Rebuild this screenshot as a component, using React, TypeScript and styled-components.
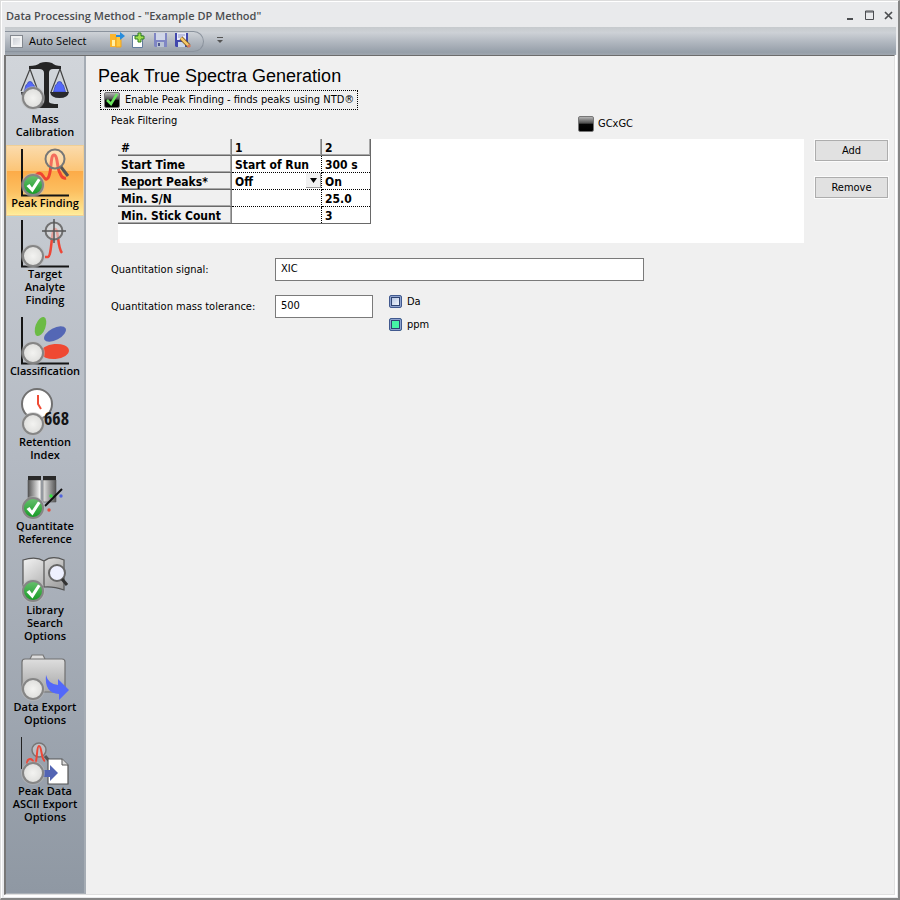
import React from "react";
import styled, { createGlobalStyle } from "styled-components";

const tahoma = `"DejaVu Sans Condensed", "DejaVu Sans", sans-serif`;
const segoe = `"Open Sans", "Noto Sans", sans-serif`;

const GlobalStyle = createGlobalStyle`
  *, *::before, *::after { box-sizing: border-box; }
  body { margin: 0; background: #e9eaec; }
  button, input, select { font: inherit; color: inherit; margin: 0; }
`;

const Window = styled.div`
  display: flex;
  flex-direction: column;
  min-height: 100vh;
  padding: 0 2px 3px 3px;
  background: #e9eaec;
  border: solid;
  border-width: 1px 2px 2px 1px;
  border-color: #dcdcdc #868686 #868686 #dcdcdc;
  box-shadow: inset 1px 1px 0 #ffffff;
  color: #000;
`;

const TitleBar = styled.header`
  display: flex;
  align-items: center;
  justify-content: space-between;
  height: 26px;
  padding: 4px 2px 0 2px;
`;

const WindowTitle = styled.h1`
  margin: 0;
  font: 600 11px/16px ${segoe};
  color: #4b4d50;
`;

const WindowButtons = styled.div`
  display: flex;
  gap: 7px;
`;

const WindowButton = styled.button`
  width: 12px;
  height: 16px;
  padding: 0;
  border: 0;
  background: none;
  svg { display: block; }
`;

const Toolbar = styled.div`
  display: flex;
  align-items: center;
  height: 28px;
  margin-left: 1px;
  background: linear-gradient(#c6cacd, #cdd1d6 20%, #b4bac2 50%, #969fa9 90%, #a0a7af);
`;

const ToolGroup = styled.div`
  display: flex;
  align-items: center;
  width: 199px;
  height: 21px;
  padding-left: 5px;
  border: 1px solid #8b939d;
  border-left: 0;
  border-radius: 0 11px 11px 0;
`;

const AutoSelect = styled.label`
  display: flex;
  align-items: center;
  gap: 6px;
  width: 96px;
  font: 500 11px/16px ${segoe};
`;

const SmallCheck = styled.input`
  appearance: none;
  width: 13px;
  height: 13px;
  border: 1px solid #83888f;
  background: linear-gradient(135deg, #c5c9d0, #f7f8f9);
  box-shadow: inset 0 0 0 2px #f1f2f3;
`;

const ToolButton = styled.button`
  width: 22px;
  height: 18px;
  padding: 0 2px;
  border: 0;
  background: none;
  svg { display: block; }
`;

const OverflowButton = styled(ToolButton)`
  width: 16px;
  margin-left: 8px;
`;

const Body = styled.div`
  display: flex;
  flex: 1;
  margin-right: 1px;
  border: solid;
  border-width: 1px 1px 1px 2px;
  border-color: #6c6c6c #e0e0e0 #e0e0e0 #777777;
  box-shadow: 1px 1px 0 1px #fff;
  background: #f0f0f0;
`;

const Sidebar = styled.nav`
  width: 80px;
  flex: none;
  padding-top: 5px;
  border-right: 2px solid #a5acb4;
  border-bottom: 1px solid #aab0b7;
  background: linear-gradient(#d1d5da, #b4bac3 48%, #8f98a3);
`;

const NavItem = styled.button<{ $active?: boolean }>`
  display: block;
  width: 100%;
  padding: 0 0 7px;
  border: 0;
  background: ${(p) =>
    p.$active
      ? "linear-gradient(#fbdcae 0, #fcc577 36%, #fcab48 37%, #fcbf60 65%, #feea96 97%, #fff3b4)"
      : "none"};
  box-shadow: ${(p) => (p.$active ? "inset 0 0 0 1px #f0cf96, 0 1px 0 #b9d3d8" : "none")};
  font: 600 11px/13px ${segoe};
  text-align: center;
  white-space: pre-line;
  svg { display: block; margin: 0 auto; overflow: visible; }
`;

const Content = styled.main`
  flex: 1;
  min-width: 0;
  padding: 10px 6px 20px 11px;
  font: 11px/14px ${tahoma};
`;

const Heading = styled.h2`
  margin: 0;
  padding-left: 1px;
  font: 18px/20px "Liberation Sans", Arial, sans-serif;
`;

const EnableLabel = styled.label`
  display: inline-flex;
  align-items: center;
  gap: 5px;
  height: 20px;
  margin: 4px 0 0 3px;
  padding: 0 3px;
  border: 1px dotted #000;
  vertical-align: top;
`;

const GlossCheck = styled.input`
  appearance: none;
  flex: none;
  display: grid;
  width: 16px;
  height: 16px;
  border: 1px solid #777;
  border-radius: 2px;
  background: linear-gradient(#b5b5b5, #4c4c4c 45%, #060606 50%, #000);
`;

const CheckSlot = styled.span`
  display: grid;
  width: 16px;
  height: 16px;
  & > * { grid-area: 1 / 1; }
  svg { pointer-events: none; z-index: 1; }
`;

const FilterHeader = styled.div`
  display: flex;
  align-items: flex-start;
  height: 29px;
  padding: 4px 0 0 14px;
`;

const FilterTitle = styled.h3`
  flex: 0 0 467px;
  margin: 0;
  font: inherit;
`;

const GcLabel = styled.label`
  display: flex;
  align-items: center;
  gap: 4px;
  margin-top: 2px;
`;

const FilterArea = styled.section`
  display: flex;
  gap: 11px;
  padding-left: 21px;
`;

const GridPanel = styled.div`
  flex: 1;
  min-width: 0;
  min-height: 104px;
  background: #fff;
`;

const Grid = styled.table`
  width: 252px;
  table-layout: fixed;
  border-collapse: separate;
  border-spacing: 0;
  font: bold 12px/14px ${tahoma};
  text-align: left;
  border-right: 1px solid #696969;
  border-bottom: 1px solid #696969;
`;

const HeadCell = styled.th`
  height: 17px;
  padding: 2px 3px 0;
  background: #f0f0f0;
  border-right: 1px solid #808080;
  border-bottom: 1px solid #696969;
  box-shadow: inset -1px -1px 0 #a8a8a8;
  white-space: nowrap;
  tr:last-child > & { border-bottom: 0; height: 16px; }
  &:last-child { border-right: 0; }
`;

const Cell = styled.td`
  position: relative;
  height: 17px;
  padding: 2px 3px 0;
  border-right: 1px dotted #000;
  border-bottom: 1px dotted #000;
  white-space: nowrap;
  tr:last-child > & { border-bottom: 0; height: 16px; }
  &:last-child { border-right: 0; }
`;

const ReportSelect = styled.select`
  appearance: none;
  display: block;
  width: 100%;
  height: 14px;
  padding: 0;
  border: 0;
  background: none;
`;

const DropArrow = styled.span`
  position: absolute;
  top: 0;
  right: 0;
  width: 15px;
  height: 15px;
  background: #f0f0f0;
  border: solid;
  border-width: 0 1px 1px 0;
  border-color: #a0a0a0;
  pointer-events: none;
  svg { display: block; }
`;

const ButtonStack = styled.div`
  display: flex;
  flex-direction: column;
  gap: 16px;
  width: 73px;
  padding-top: 1px;
`;

const PushButton = styled.button`
  height: 21px;
  padding: 1px 0 0;
  border: 1px solid #adadad;
  background: #e1e1e1;
  box-shadow: 0 0 0 1px #fbfbfb;
`;

const Form = styled.form`
  display: grid;
  grid-template-columns: 164px 1fr;
  row-gap: 14px;
  padding: 15px 0 0 14px;
`;

const FieldLabel = styled.label`
  padding-top: 5px;
`;

const TextField = styled.input<{ $width: number }>`
  width: ${(p) => p.$width}px;
  max-width: 100%;
  height: 23px;
  padding: 0 5px 2px;
  border: 1px solid #7a7a7a;
  border-radius: 0;
  background: #fff;
`;

const ToleranceRow = styled.div`
  display: flex;
  gap: 16px;
`;

const Units = styled.fieldset`
  display: flex;
  flex-direction: column;
  gap: 10px;
  margin: 0;
  padding: 0;
  border: 0;
  min-width: 0;
`;

const UnitLabel = styled.label`
  display: flex;
  align-items: center;
  gap: 5px;
  line-height: 12px;
`;

const UnitRadio = styled.input`
  appearance: none;
  width: 13px;
  height: 13px;
  border: 1px solid #41598f;
  border-radius: 2px;
  background: linear-gradient(135deg, #a9bde0, #fff);
  box-shadow: inset 0 0 0 1px #8ea3cf, inset 0 0 0 2px #2e4271;
  &:checked { background: #45f5a5; }
`;

/* Shared badge drawn at the lower left of every step icon. */
const Badge = ({ done, y = 40 }: { done?: boolean; y?: number }) => (
  <g>
    <circle cx="16" cy={y} r="12" fill="#bbb" opacity=".5" />
    <circle cx="16" cy={y} r="10" fill={done ? "url(#badgeGreen)" : "url(#badgeGray)"} stroke="#858585" strokeWidth="2" />
    {done && (
      <path d={`M9.500 ${y + 1} l3 -2 l2.500 3.500 l6 -9 l2.500 1.500 l-8 12.500 z`} fill="#fff" />
    )}
  </g>
);

const Axes = () => (
  <path d="M5 4V51.500M4 50.500H52" fill="none" stroke="#151515" strokeWidth="2" />
);

const Weight = ({ x }: { x: number }) => (
  <path d={`M${x - 2.5} 23a2.500 2.500 0 1 1 5 0l1.500 1l2 7h-12l2-7z`} fill="#5468fa" stroke="#3343ad" strokeWidth=".7" />
);

const BalanceArt = () => (
  <>
    <path d="M12 5Q20 5 23 2Q29 0 35 2Q38 5 44 5V8H36Q32 8 32 12V41Q33 43 41 43V47H17V43Q26 43 27 41V12Q27 8 22 8H12Z" fill="#252525" />
    <path d="M13 8L4 30M13 8l8 22M43 8l-9 23M43 8l8 23" stroke="#444" strokeWidth="1.200" fill="none" />
    <Weight x={13} />
    <Weight x={42.5} />
    <path d="M33 31h19q-1 6-9.500 6t-9.500-6zM4 31h17q-1 6-9 6t-8-6z" fill="#29292d" />
    <Badge y={37} />
  </>
);

const PeakArt = () => (
  <>
    <Axes />
    <path d="M19 30q4-4 7 1t5 2c4-5 2-23 6-23s3 15 6 18q2 6 6 5" fill="none" stroke="#f04430" strokeWidth="3" />
    <circle cx="38" cy="14" r="9.500" fill="#fff" fillOpacity=".22" stroke="#777" strokeWidth="2" />
    <path d="M44 22l7 9" stroke="#555" strokeWidth="3" />
    <Badge done />
  </>
);

const TargetArt = () => (
  <>
    <Axes />
    <path d="M28 41h3c4-1 3-28 7-28s2 18 7 24" fill="none" stroke="#ed4737" strokeWidth="2.500" />
    <circle cx="37" cy="15" r="8.500" fill="#ddd" fillOpacity=".6" stroke="#717171" strokeWidth="2" />
    <path d="M37 3v24M25 15h24" stroke="#555" strokeWidth="1.500" />
    <Badge />
  </>
);

const ClassArt = () => (
  <>
    <Axes />
    <ellipse cx="23.500" cy="13.500" rx="5" ry="10" transform="rotate(20 23.500 13.500)" fill="#6bbb45" />
    <ellipse cx="38" cy="21" rx="12" ry="6" transform="rotate(-28 38 21)" fill="#5467b5" />
    <ellipse cx="38" cy="38.500" rx="14" ry="7.500" transform="rotate(-5 38 38.500)" fill="#ef4933" />
    <Badge />
  </>
);

const RetentionArt = () => (
  <>
    <circle cx="20" cy="20" r="15" fill="#fff" stroke="#717171" strokeWidth="2" />
    <path d="M21 11v9l3 5" fill="none" stroke="#f04b35" strokeWidth="2" />
    <text x="27" y="41" fontFamily="Open Sans Condensed, DejaVu Sans Condensed, sans-serif" fontSize="18" fontWeight="500" fill="#151515">668</text>
    <Badge y={40} />
  </>
);

const VialsArt = () => (
  <>
    <path d="M11 12h13v23H11zM26 12h13v22H26z" fill="url(#metal)" stroke="#555" strokeWidth=".6" />
    <path d="M11 8h13v4H11zM26 8h13v4H26z" fill="#292929" />
    <path d="M28 38L45 21" stroke="#111" strokeWidth="2" />
    <circle cx="34" cy="28" r="1.700" fill="#31e33d" />
    <circle cx="44" cy="28" r="1.700" fill="#5265dc" />
    <circle cx="32" cy="42" r="1.700" fill="#e34b3d" />
    <Badge done />
  </>
);

const BookArt = () => (
  <>
    <path d="M6 8q13-4 21 1v26q-10-5-21-1zM27 9q8-6 20-1v30q-11-4-20-3z" fill="url(#paper)" stroke="#555" strokeWidth="1.200" />
    <circle cx="40" cy="21" r="8" fill="#eef0ff" stroke="#666" strokeWidth="2" />
    <path d="M45 27l5 6" stroke="#333" strokeWidth="3" />
    <Badge done y={39} />
  </>
);

const ExportArt = () => (
  <>
    <path d="M13 10l2-4h11l2 4" fill="#ddd" stroke="#777" strokeWidth="1.200" />
    <rect x="5" y="10" width="43" height="33" rx="3" fill="url(#folder)" stroke="#707070" strokeWidth="1.200" />
    <path d="M29 26q2 9 12 10v-6l11 11l-10 10v-6q-15-1-13-19z" fill="#5368fa" />
    <Badge />
  </>
);

const AsciiArt = () => (
  <>
    <path d="M4.500 4v32" stroke="#222" />
    <circle cx="22" cy="17" r="7" fill="#ddd" fillOpacity=".5" stroke="#777" strokeWidth="1.500" />
    <path d="M28 23l6 7" stroke="#555" strokeWidth="3" />
    <path d="M10 31q0-5 3-5t4 5c4 0 2-18 5-18s2 14 6 15" fill="none" stroke="#ed4737" strokeWidth="2" />
    <path d="M31 26h14l6 6v19H31z" fill="#fff" stroke="#555" strokeWidth="1.200" />
    <path d="M45 26v6h6" fill="#ddd" stroke="#555" />
    <path d="M24 37h9v-5l8 8l-8 8v-4h-9z" fill="#5264b4" />
    <Badge />
  </>
);

const steps: { label: string; Art: React.FC; active?: boolean }[] = [
  { label: "Mass\nCalibration", Art: BalanceArt },
  { label: "Peak Finding", Art: PeakArt, active: true },
  { label: "Target\nAnalyte\nFinding", Art: TargetArt },
  { label: "Classification", Art: ClassArt },
  { label: "Retention\nIndex", Art: RetentionArt },
  { label: "Quantitate\nReference", Art: VialsArt },
  { label: "Library\nSearch\nOptions", Art: BookArt },
  { label: "Data Export\nOptions", Art: ExportArt },
  { label: "Peak Data\nASCII Export\nOptions", Art: AsciiArt },
];

const Gradients = () => (
  <defs>
    <radialGradient id="badgeGray">
      <stop offset="0" stopColor="#f3f3f1" />
      <stop offset="1" stopColor="#dededc" />
    </radialGradient>
    <linearGradient id="badgeGreen" x2="0" y2="1">
      <stop offset="0" stopColor="#6ac070" />
      <stop offset="1" stopColor="#149a22" />
    </linearGradient>
    <linearGradient id="metal">
      <stop offset="0" stopColor="#555" />
      <stop offset=".45" stopColor="#fff" />
      <stop offset="1" stopColor="#555" />
    </linearGradient>
    <linearGradient id="paper" x2="1" y2="1">
      <stop offset="0" stopColor="#f4f4f4" />
      <stop offset="1" stopColor="#999" />
    </linearGradient>
    <linearGradient id="folder" x2="0" y2="1">
      <stop offset="0" stopColor="#dedede" />
      <stop offset="1" stopColor="#a6a6a6" />
    </linearGradient>
  </defs>
);

export default function App() {
  return (
    <Window>
      <GlobalStyle />
      <TitleBar>
        <WindowTitle>Data Processing Method - "Example DP Method"</WindowTitle>
        <WindowButtons>
          <WindowButton aria-label="Minimize">
            <svg width="12" height="16"><path d="M3 11h6" stroke="#4b4d50" strokeWidth="2" /></svg>
          </WindowButton>
          <WindowButton aria-label="Maximize">
            <svg width="12" height="16"><path d="M2.500 3v8.500h8V3zM2 4h9" fill="none" stroke="#4b4d50" /></svg>
          </WindowButton>
          <WindowButton aria-label="Close">
            <svg width="12" height="16"><path d="M3 4l7 7M10 4l-7 7" stroke="#4b4d50" strokeWidth="1.700" /></svg>
          </WindowButton>
        </WindowButtons>
      </TitleBar>

      <Toolbar>
        <ToolGroup>
          <AutoSelect><SmallCheck type="checkbox" />Auto Select</AutoSelect>
          <ToolButton aria-label="Open">
            <svg width="18" height="18" viewBox="0 1 18 18">
              <path d="M2 3h6v13H2z" fill="#fbb52c" /><path d="M8 6l5-2v12H8z" fill="#ffc83e" stroke="#efa21f" />
              <path d="M4 15V9h3v6z" fill="#fff0a5" /><path d="M8 4h4V1l5 4l-5 4V6H8z" fill="#278cdd" />
            </svg>
          </ToolButton>
          <ToolButton aria-label="New">
            <svg width="18" height="18" viewBox="0 0 18 18">
              <path d="M2.500 3.500h10v12h-10z" fill="#fff" stroke="#627c9d" />
              <path d="M8 1h3v3h3v3h-3v3H8V7H5V4h3z" fill="#a1df50" stroke="#317e22" />
            </svg>
          </ToolButton>
          <ToolButton aria-label="Save">
            <svg width="18" height="18" viewBox="0 1 18 18">
              <path d="M2 2h13v14H3l-1-1z" fill="#7f86c4" /><path d="M4 2h9v7H4z" fill="#d0d6e8" /><path d="M5 11h7v5H5z" fill="#bac4d5" /><path d="M6 12h2v3H6z" fill="#4d568b" />
            </svg>
          </ToolButton>
          <ToolButton aria-label="Save as">
            <svg width="18" height="18" viewBox="0 1 18 18">
              <path d="M1 2h13v14H2l-1-1z" fill="#4148ad" /><path d="M3 2h9v7H3z" fill="#e7eafb" /><path d="M4 4h7M4 6h5" stroke="#9297c4" /><path d="M4 11h7v5H4z" fill="#cbd7ea" />
              <path d="M7 7l8 8" stroke="#715214" strokeWidth="4" /><path d="M7 7l8 8" stroke="#f6c768" strokeWidth="2.500" /><path d="M14 14l2 2" stroke="#d6795e" strokeWidth="3" />
            </svg>
          </ToolButton>
        </ToolGroup>
        <OverflowButton aria-label="Toolbar options">
          <svg width="12" height="18"><path d="M3 5.500h6" stroke="#555" /><path d="M3 8h6l-3 3z" fill="#555" /></svg>
        </OverflowButton>
      </Toolbar>

      <Body>
        <Sidebar>
          {steps.map(({ label, Art, active }, i) => (
            <NavItem key={label} $active={active}>
              <svg width="56" height="51" viewBox="0 0 56 51" aria-hidden="true">
                {i === 0 && <Gradients />}
                <Art />
              </svg>
              {label}
            </NavItem>
          ))}
        </Sidebar>

        <Content>
          <Heading>Peak True Spectra Generation</Heading>
          <EnableLabel>
            <CheckSlot>
              <GlossCheck type="checkbox" defaultChecked />
              <svg width="16" height="16"><path d="M3 8l4 4l6-10" fill="none" stroke="#6be45e" strokeWidth="2.500" /></svg>
            </CheckSlot>
            Enable Peak Finding - finds peaks using NTD®
          </EnableLabel>

          <FilterHeader>
            <FilterTitle>Peak Filtering</FilterTitle>
            <GcLabel><GlossCheck type="checkbox" />GCxGC</GcLabel>
          </FilterHeader>

          <FilterArea>
            <GridPanel>
              <Grid>
                <colgroup><col width="114" /><col width="90" /><col width="48" /></colgroup>
                <tbody>
                  <tr><HeadCell scope="col">#</HeadCell><HeadCell scope="col">1</HeadCell><HeadCell scope="col">2</HeadCell></tr>
                  <tr><HeadCell scope="row">Start Time</HeadCell><Cell>Start of Run</Cell><Cell>300 s</Cell></tr>
                  <tr>
                    <HeadCell scope="row">Report Peaks*</HeadCell>
                    <Cell>
                      <ReportSelect aria-label="Report Peaks" defaultValue="Off">
                        <option>Off</option>
                        <option>On</option>
                      </ReportSelect>
                      <DropArrow><svg width="14" height="14"><path d="M4 5h7l-3.500 5z" fill="#000" /></svg></DropArrow>
                    </Cell>
                    <Cell>On</Cell>
                  </tr>
                  <tr><HeadCell scope="row">Min. S/N</HeadCell><Cell /><Cell>25.0</Cell></tr>
                  <tr><HeadCell scope="row">Min. Stick Count</HeadCell><Cell /><Cell>3</Cell></tr>
                </tbody>
              </Grid>
            </GridPanel>
            <ButtonStack>
              <PushButton>Add</PushButton>
              <PushButton>Remove</PushButton>
            </ButtonStack>
          </FilterArea>

          <Form>
            <FieldLabel htmlFor="signal">Quantitation signal:</FieldLabel>
            <TextField id="signal" $width={369} defaultValue="XIC" />
            <FieldLabel htmlFor="tolerance">Quantitation mass tolerance:</FieldLabel>
            <ToleranceRow>
              <TextField id="tolerance" $width={98} defaultValue="500" />
              <Units aria-label="Tolerance unit">
                <UnitLabel><UnitRadio type="radio" name="unit" />Da</UnitLabel>
                <UnitLabel><UnitRadio type="radio" name="unit" defaultChecked />ppm</UnitLabel>
              </Units>
            </ToleranceRow>
          </Form>
        </Content>
      </Body>
    </Window>
  );
}
